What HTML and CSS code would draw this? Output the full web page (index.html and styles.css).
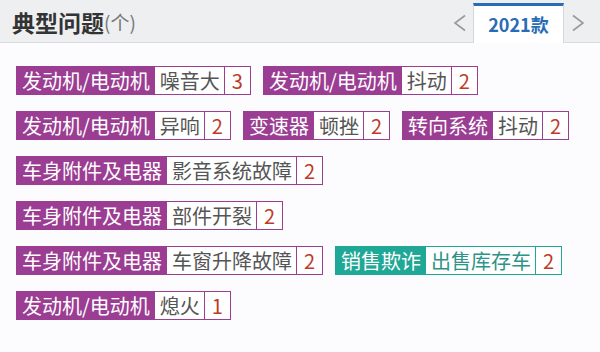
FILE: index.html
```html
<!DOCTYPE html>
<html lang="zh-CN">
<head>
<meta charset="utf-8">
<link rel="stylesheet" href="styles.css">
</head>
<body>
<div class="panel">
  <div class="header">
    <div class="title">典型问题<span class="unit">(个)</span></div>
    <div class="nav">
      <span class="arrow"><svg width="14" height="18" viewBox="0 0 14 18"><polyline points="12,1.5 2,9 12,16.5" fill="none" stroke="#9a9a9a" stroke-width="1.6"/></svg></span>
      <div class="tab">2021款</div>
      <span class="arrow right"><svg width="14" height="18" viewBox="0 0 14 18"><polyline points="2,1.5 12,9 2,16.5" fill="none" stroke="#9a9a9a" stroke-width="1.6"/></svg></span>
    </div>
  </div>
  <div class="tags">
    <div class="row">
      <div class="tag"><span class="lab">发动机/电动机</span><span class="val">噪音大</span><span class="cnt">3</span></div>
      <div class="tag"><span class="lab">发动机/电动机</span><span class="val">抖动</span><span class="cnt">2</span></div>
    </div>
    <div class="row">
      <div class="tag"><span class="lab">发动机/电动机</span><span class="val">异响</span><span class="cnt">2</span></div>
      <div class="tag"><span class="lab">变速器</span><span class="val">顿挫</span><span class="cnt">2</span></div>
      <div class="tag"><span class="lab">转向系统</span><span class="val">抖动</span><span class="cnt">2</span></div>
    </div>
    <div class="row">
      <div class="tag"><span class="lab">车身附件及电器</span><span class="val">影音系统故障</span><span class="cnt">2</span></div>
    </div>
    <div class="row">
      <div class="tag"><span class="lab">车身附件及电器</span><span class="val">部件开裂</span><span class="cnt">2</span></div>
    </div>
    <div class="row">
      <div class="tag"><span class="lab">车身附件及电器</span><span class="val">车窗升降故障</span><span class="cnt">2</span></div>
      <div class="tag teal"><span class="lab">销售欺诈</span><span class="val">出售库存车</span><span class="cnt">2</span></div>
    </div>
    <div class="row">
      <div class="tag"><span class="lab">发动机/电动机</span><span class="val">熄火</span><span class="cnt">1</span></div>
    </div>
  </div>
</div>
</body>
</html>
```
FILE: styles.css
```css
* { box-sizing: border-box; }
html, body { margin: 0; padding: 0; }
body {
  width: 600px;
  height: 352px;
  background: #fcfcfe;
  font-family: "Noto Sans CJK SC", "Noto Sans", sans-serif;
  overflow: hidden;
}
.panel { width: 600px; height: 352px; }
.header {
  height: 43px;
  background: #eeeff1;
  border-bottom: 1px solid #dcdcde;
  display: flex;
  align-items: stretch;
  justify-content: space-between;
  padding-left: 12px;
}
.title {
  display: flex;
  align-items: center;
  font-size: 23px;
  font-weight: 700;
  color: #333;
  padding-top: 1px;
}
.unit {
  font-size: 19px;
  font-weight: 400;
  color: #777;
}
.nav {
  display: flex;
  align-items: stretch;
  padding-top: 3px;
}
.arrow {
  display: flex;
  align-items: center;
  justify-content: center;
  width: 26px;
}
.arrow.right { width: 36px; padding-right: 9px; }
.tab {
  width: 91px;
  margin-bottom: -1px;
  background: #fff;
  border-top: 3px solid #2a6cb4;
  border-left: 1px solid #d6d6d8;
  border-right: 1px solid #d6d6d8;
  display: flex;
  align-items: center;
  justify-content: center;
  font-size: 18px;
  font-weight: 700;
  color: #2a6cb4;
  padding-bottom: 2px;
}
.tags {
  display: flex;
  flex-direction: column;
  gap: 16px;
  padding: 23px 16px 0 16px;
}
.row {
  display: flex;
  gap: 12px;
}
.tag {
  display: flex;
  flex-shrink: 0;
  white-space: nowrap;
  height: 29px;
  border: 1px solid #9b3d93;
  font-size: 20px;
  line-height: 27px;
  background: #fff;
}
.lab {
  background: #9b3d93;
  color: #fff;
  padding: 0 5px;
}
.val {
  color: #555;
  padding: 0 4px 0 5px;
}
.cnt {
  color: #c0392b;
  padding: 0 7px;
  border-left: 1px solid #9b3d93;
}
.tag.teal { border-color: #1fa896; }
.tag.teal .lab { background: #1fa896; }
.tag.teal .val { color: #2e9488; }
.tag.teal .cnt { border-left-color: #1fa896; }
```
